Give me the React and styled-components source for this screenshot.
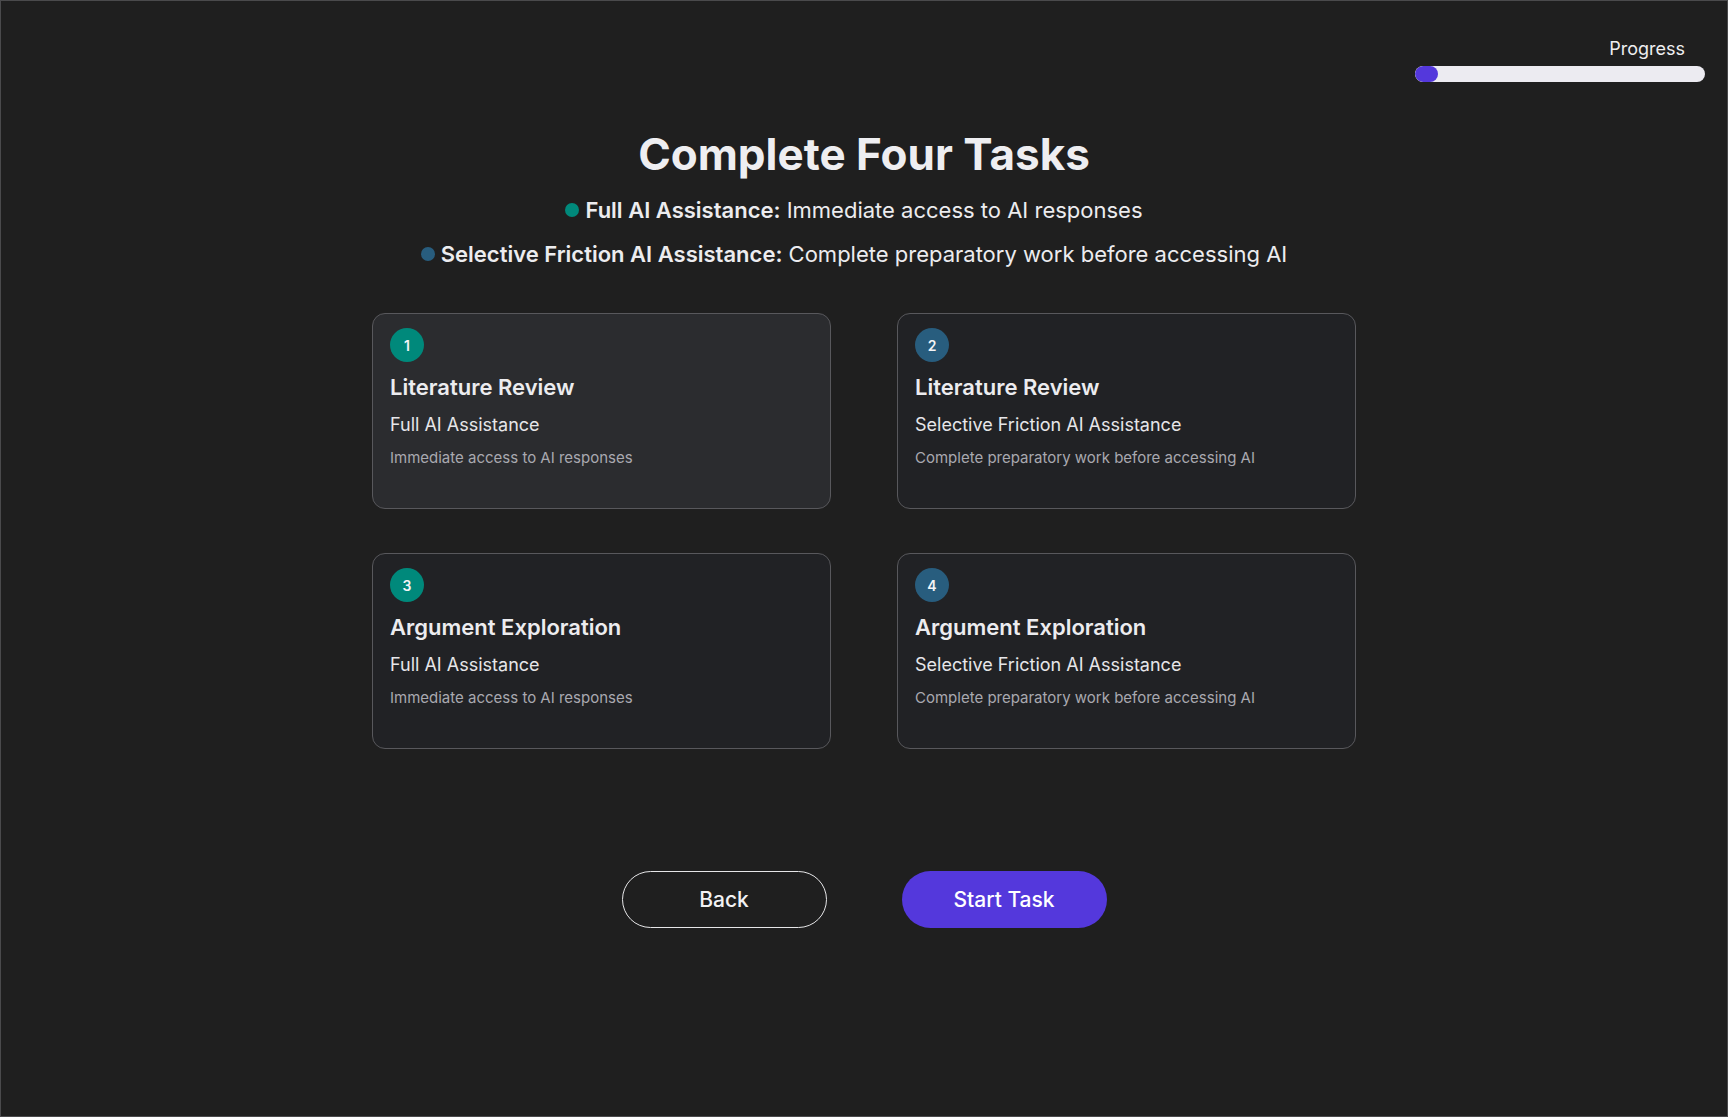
import React from "react";
import styled, { createGlobalStyle } from "styled-components";

const Global = createGlobalStyle`
  html, body { margin: 0; padding: 0; background: #1f1f1f; }
  body { font-family: Inter, "Noto Sans", sans-serif; color: #ededf0; -webkit-font-smoothing: antialiased; }
  * { box-sizing: border-box; }
`;

const Page = styled.div`
  min-height: 100vh;
  display: flex;
  flex-direction: column;
  border: 1px solid #4a4a4c;
  background: #1f1f1f;
`;

const TopBar = styled.header`
  display: flex;
  justify-content: flex-end;
  padding: 37px 22px 0 0;
`;

const ProgressBox = styled.div`
  width: 290px;
  display: flex;
  flex-direction: column;
  align-items: flex-end;
`;

const ProgressLabel = styled.span`
  font-size: 18px;
  line-height: 22px;
  color: #eeeef0;
  padding-right: 20px;
  margin-bottom: 6px;
`;

const Track = styled.div`
  width: 100%;
  height: 16px;
  border-radius: 8px;
  background: #ecebf1;
  overflow: hidden;
`;

const Fill = styled.div`
  height: 100%;
  border-radius: 8px;
  background: #5438dc;
`;

const Main = styled.main`
  display: flex;
  flex-direction: column;
  align-items: center;
`;

const Title = styled.h1`
  margin: 46px 0 0;
  font-size: 44px;
  line-height: 52px;
  font-weight: 700;
  color: #eeeef1;
`;

const Legend = styled.div`
  margin-top: 16px;
  padding-right: 20px;
  display: flex;
  flex-direction: column;
  align-items: center;
  gap: 16px;
`;

const LegendLine = styled.p`
  margin: 0;
  display: flex;
  align-items: center;
  font-size: 22px;
  line-height: 28px;
  color: #ececef;
  white-space: pre;
  b { font-weight: 600; }
`;

const Dot = styled.span`
  width: 14px;
  height: 14px;
  border-radius: 50%;
  background: ${(p) => p.$color};
  margin-right: 6px;
  flex: none;
`;

const Grid = styled.section`
  margin-top: 45px;
  width: 984px;
  display: grid;
  grid-template-columns: 1fr 1fr;
  column-gap: 66px;
  row-gap: 44px;
`;

const Card = styled.div`
  border: 1px solid #58585c;
  border-radius: 13px;
  background: ${(p) => (p.$active ? "#2b2c2f" : "#212225")};
  padding: 14px 17px 41px;
  display: flex;
  flex-direction: column;
  align-items: flex-start;
`;

const Badge = styled.span`
  width: 34px;
  height: 34px;
  border-radius: 50%;
  background: ${(p) => p.$color};
  color: #f4f4f6;
  display: flex;
  align-items: center;
  justify-content: center;
  font-size: 14px;
  font-weight: 600;
  margin-bottom: 12px;
`;

const CardTitle = styled.h3`
  margin: 0 0 14px;
  font-size: 22px;
  line-height: 26px;
  font-weight: 600;
  color: #ececef;
`;

const CardMode = styled.div`
  font-size: 18px;
  line-height: 22px;
  color: #e6e6e9;
  margin-bottom: 13px;
`;

const CardDesc = styled.div`
  font-size: 15px;
  line-height: 18px;
  color: #a9a9b0;
`;

const Actions = styled.div`
  margin-top: 122px;
  display: flex;
  gap: 75px;
`;

const Button = styled.button`
  width: 205px;
  height: 57px;
  border-radius: 999px;
  font-family: Inter, "Noto Sans", sans-serif;
  font-size: 21px;
  font-weight: 500;
  cursor: pointer;
  color: ${(p) => (p.$primary ? "#ffffff" : "#f2f2f4")};
  background: ${(p) => (p.$primary ? "#5438dc" : "transparent")};
  border: ${(p) => (p.$primary ? "none" : "1.5px solid #e6e6e8")};
`;

const TEAL = "#00897b";
const BLUE = "#285d7e";

const tasks = [
  { n: 1, title: "Literature Review", mode: "Full AI Assistance", desc: "Immediate access to AI responses", color: TEAL, active: true },
  { n: 2, title: "Literature Review", mode: "Selective Friction AI Assistance", desc: "Complete preparatory work before accessing AI", color: BLUE },
  { n: 3, title: "Argument Exploration", mode: "Full AI Assistance", desc: "Immediate access to AI responses", color: TEAL },
  { n: 4, title: "Argument Exploration", mode: "Selective Friction AI Assistance", desc: "Complete preparatory work before accessing AI", color: BLUE },
];

export default function App() {
  return (
    <>
      <Global />
      <Page>
        <TopBar>
          <ProgressBox>
            <ProgressLabel>Progress</ProgressLabel>
            <Track>
              <Fill style={{ width: "8%" }} />
            </Track>
          </ProgressBox>
        </TopBar>
        <Main>
          <Title>Complete Four Tasks</Title>
          <Legend>
            <LegendLine>
              <Dot $color={TEAL} />
              <b>Full AI Assistance:</b> Immediate access to AI responses
            </LegendLine>
            <LegendLine>
              <Dot $color={BLUE} />
              <b>Selective Friction AI Assistance:</b> Complete preparatory work before accessing AI
            </LegendLine>
          </Legend>
          <Grid>
            {tasks.map((t) => (
              <Card key={t.n} $active={t.active}>
                <Badge $color={t.color}>{t.n}</Badge>
                <CardTitle>{t.title}</CardTitle>
                <CardMode>{t.mode}</CardMode>
                <CardDesc>{t.desc}</CardDesc>
              </Card>
            ))}
          </Grid>
          <Actions>
            <Button>Back</Button>
            <Button $primary>Start Task</Button>
          </Actions>
        </Main>
      </Page>
    </>
  );
}
